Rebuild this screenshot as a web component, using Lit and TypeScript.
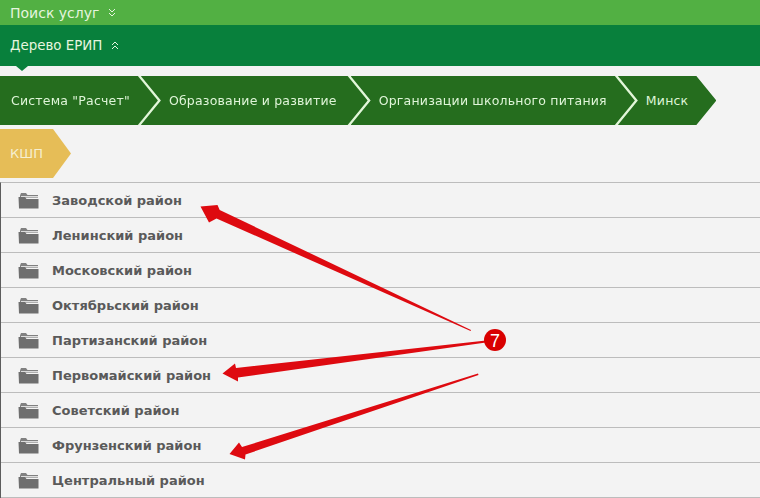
import { LitElement, html, css, svg } from "lit";
import { customElement } from "lit/decorators.js";

const CRUMBS = ["Система \"Расчет\"", "Образование и развитие", "Организации школьного питания", "Минск"];
const ROWS = ["Заводской район", "Ленинский район", "Московский район", "Октябрьский район", "Партизанский район", "Первомайский район", "Советский район", "Фрунзенский район", "Центральный район"];

const ARROWS = [
  "471,330 470.6,331 216.5,218.5 209,222.5 200.5,206.5 217.5,205 219.7,210",
  "486,340.5 486,342.5 238,377.5 238,381.5 222.5,373.5 235,363.5 236,368",
  "478,373.5 478.5,375 245.5,454.5 245,459.5 229.5,454 239,442.5 242,447",
];

@customElement("app-root")
export class AppRoot extends LitElement {
  static styles = css`
    :host { display: block; position: relative; width: 760px; height: 498px; overflow: hidden; background: #f3f3f3; font-family: "DejaVu Sans", Verdana, sans-serif; }
    .bar { display: flex; align-items: center; padding-left: 10px; color: #e6f5df; }
    .search { height: 25px; background: #52b043; font-size: 14px; gap: 9px; }
    .tree { height: 41px; background: #08803c; font-size: 13.4px; gap: 9px; position: relative; }
    .tree::after { content: ""; position: absolute; left: 16px; top: 100%; border-style: solid; border-width: 5px 6px 0; border-color: #08803c transparent transparent; }
    .chev { width: 8px; height: 9px; }
    .crumbs { display: flex; margin-top: 10px; height: 49px; }
    .crumb { margin-left: -17px; filter: drop-shadow(3px 0 0 #e2f7d9); }
    .crumb:first-child { margin-left: 0; }
    .crumb:last-child { filter: none; }
    .shape { height: 49px; display: flex; align-items: center; box-sizing: border-box; padding: 0 31px 0 28px; background: #256d1e; color: #dff5d8; font-size: 12.5px; letter-spacing: 0.2px; white-space: nowrap; clip-path: polygon(0 0, calc(100% - 20px) 0, 100% 50%, calc(100% - 20px) 100%, 0 100%, 20px 50%); }
    .crumb:first-child .shape { padding: 0 28px 0 11px; clip-path: polygon(0 0, calc(100% - 20px) 0, 100% 50%, calc(100% - 20px) 100%, 0 100%); }
    .crumb:nth-child(3) .shape { padding-right: 28px; }
    .crumb:last-child .shape { padding-right: 28px; }
    .gold { margin-top: 4px; width: 71px; height: 49px; box-sizing: border-box; padding-left: 10px; display: flex; align-items: center; background: #e6bd57; color: #f6efd0; font-size: 13px; clip-path: polygon(0 0, 53px 0, 100% 50%, 53px 100%, 0 100%); }
    .rows { margin-top: 4px; border-top: 1px solid #bcbcbc; border-left: 1px solid #5c5c5c; }
    .row { height: 34px; border-bottom: 1px solid #bcbcbc; display: flex; align-items: center; gap: 13px; padding-left: 17px; color: #5a5a5a; font-size: 13px; font-weight: 700; }
    .folder { width: 21px; height: 17px; flex: none; }
    .overlay { position: absolute; inset: 0; pointer-events: none; }
    .num { font: 400 18px "Liberation Sans", sans-serif; fill: #fff; text-anchor: middle; }
  `;

  private chevron(up: boolean) {
    const d = up ? "M1 4 4 1 7 4M1 8 4 5 7 8" : "M1 1 4 4 7 1M1 5 4 8 7 5";
    return html`<svg class="chev" viewBox="0 0 8 9" fill="none" stroke="#e6f5df" stroke-width="1"><path d=${d}></path></svg>`;
  }

  private folder() {
    return html`<svg class="folder" viewBox="0 0 21 17">
      <path d="M2 3.5 3 1h5l1.5 2H20v3H2z" fill="#808080"></path>
      <path d="M3 4h17v1.5H3z" fill="#dcdcdc"></path>
      <path d="M0.5 5 1 16.5h19.5V7H8.5L7 5z" fill="#6e6e6e"></path>
    </svg>`;
  }

  render() {
    return html`
      <div class="bar search">Поиск услуг ${this.chevron(false)}</div>
      <div class="bar tree">Дерево ЕРИП ${this.chevron(true)}</div>
      <div class="crumbs">
        ${CRUMBS.map((c) => html`<div class="crumb"><div class="shape">${c}</div></div>`)}
      </div>
      <div class="gold">КШП</div>
      <div class="rows">
        ${ROWS.map((r) => html`<div class="row">${this.folder()}<span>${r}</span></div>`)}
      </div>
      <svg class="overlay" viewBox="0 0 760 498">
        ${ARROWS.map((p) => svg`<polygon points=${p} fill="#de0a10"></polygon>`)}
        <circle cx="495" cy="340" r="11" fill="#d90000"></circle>
        <text class="num" x="495" y="346.5">7</text>
      </svg>
    `;
  }
}
